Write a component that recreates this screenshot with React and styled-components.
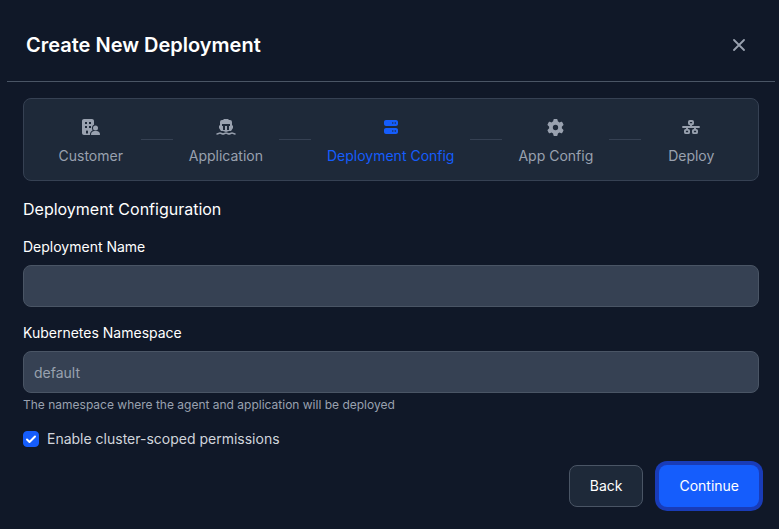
import React, { useState } from "react";
import styled, { createGlobalStyle } from "styled-components";
import { FaGear } from "react-icons/fa6";

const GlobalStyle = createGlobalStyle`
  * { box-sizing: border-box; }
  body {
    margin: 0;
    min-height: 100vh;
    background: #101828;
    color: #ffffff;
    font-family: Inter, "Liberation Sans", sans-serif;
    font-size: 14px;
    line-height: 20px;
  }
  button, input { font: inherit; }
`;

const Dialog = styled.main`
  margin: 0 4px 0 7px;
`;

const Header = styled.header`
  display: flex;
  align-items: center;
  justify-content: space-between;
  height: 82px;
  padding: 8px 20px 0 19px;
  border-bottom: 1px solid #4a5565;
`;

const Title = styled.h1`
  margin: 0;
  font-size: 20px;
  line-height: 28px;
  font-weight: 600;
`;

const CloseButton = styled.button`
  display: flex;
  align-items: center;
  justify-content: center;
  width: 32px;
  height: 32px;
  padding: 0;
  border: 0;
  border-radius: 8px;
  background: transparent;
  color: #99a1af;
  cursor: pointer;
`;

const Body = styled.form`
  padding: 16px;
`;

const Steps = styled.ol`
  display: flex;
  align-items: center;
  justify-content: center;
  gap: 16px;
  margin: 0;
  padding: 16px;
  border: 1px solid #364153;
  border-radius: 8px;
  background: #1e2939;
  list-style: none;
`;

const Step = styled.li`
  display: flex;
  flex-direction: column;
  align-items: center;
  gap: 8px;
  min-width: 68px;
  line-height: 17px;
  white-space: nowrap;
  color: ${({ $active }) => ($active ? "#155dfc" : "#99a1af")};
`;

const StepIcon = styled.span`
  display: flex;
  align-items: center;
  justify-content: center;
  height: 24px;
`;

const Connector = styled.li`
  flex: 0 1 32px;
  height: 1px;
  background: #364153;
`;

const SectionTitle = styled.h2`
  margin: 16px 0;
  font-size: 16px;
  line-height: 24px;
  font-weight: 400;
`;

const Field = styled.div`
  display: flex;
  flex-direction: column;
  margin-bottom: 16px;
`;

const Label = styled.label`
  margin-bottom: 8px;
`;

const TextInput = styled.input`
  width: 100%;
  height: 42px;
  padding: 0 10px;
  border: 1px solid #4a5565;
  border-radius: 8px;
  background: #364153;
  color: #ffffff;
  &::placeholder { color: #99a1af; opacity: 1; }
`;

const Hint = styled.small`
  margin-top: 4px;
  font-size: 12px;
  line-height: 16px;
  color: #99a1af;
`;

const CheckRow = styled.label`
  display: flex;
  align-items: center;
  gap: 8px;
  color: #d1d5dc;
`;

const Checkbox = styled.input`
  appearance: none;
  width: 16px;
  height: 16px;
  margin: 0;
  border: 1px solid #4a5565;
  border-radius: 4px;
  background: #364153;
  &:checked {
    border-color: #155dfc;
    background: #155dfc
      url("data:image/svg+xml,%3Csvg xmlns='http://www.w3.org/2000/svg' viewBox='0 0 14 14' fill='none' stroke='white' stroke-width='2' stroke-linecap='round' stroke-linejoin='round'%3E%3Cpath d='M3 7.5l2.5 2.5L11 4.5'/%3E%3C/svg%3E")
      center / 14px no-repeat;
  }
`;

const Actions = styled.footer`
  display: flex;
  justify-content: flex-end;
  gap: 16px;
  margin-top: 16px;
`;

const Button = styled.button`
  height: 42px;
  padding: 0 20px;
  border: 1px solid #4a5565;
  border-radius: 8px;
  background: #1e2939;
  color: #ffffff;
  cursor: pointer;
`;

const PrimaryButton = styled(Button)`
  border: 0;
  background: #155dfc;
  box-shadow: 0 0 0 4px #193cb8;
`;

const BuildingUserIcon = () => (
  <svg width="18" height="16" viewBox="0 0 576 512" fill="currentColor" aria-hidden="true">
    <path
      fillRule="evenodd"
      d="M64 0h256c35 0 64 29 64 64v122c-39 19-65 56-65 102 0 25 8 49 22 68-44 26-77 69-85 120-1 13 1 25 7 36H64c-35 0-64-29-64-64V64C0 29 29 0 64 0zM96 96v64h64V96H96zm128 0v64h64V96h-64zM96 224v64h64v-64H96zm128 0v64h64v-64h-64zM160 368c-18 0-32 14-32 32v64h64v-64c0-18-14-32-32-32z"
    />
    <circle cx="432" cy="288" r="80" />
    <path d="M288 492c0-61 47-108 108-108h72c61 0 108 47 108 108 0 11-9 20-20 20H308c-11 0-20-9-20-20z" />
  </svg>
);

const ShipIcon = () => (
  <svg width="20" height="18" viewBox="0 0 20 18" fill="currentColor" aria-hidden="true">
    <path
      fillRule="evenodd"
      d="M8 1h4l1 1h1a2 2 0 0 1 2 2v3l1 1v2l-2 3h-2l-3 1-3-1H5l-2-3V8l1-1V4a2 2 0 0 1 2-2h1zM6 6v2h1v4h2V8h2v4h2V8h1V6z"
    />
    <path
      d="M1 16c1.500 0 2-1 3-1s2 1 3 1 2-1 3-1 2 1 3 1 2-1 3-1 1.500 1 3 1"
      fill="none"
      stroke="currentColor"
      strokeWidth="1.500"
      strokeLinecap="round"
    />
  </svg>
);

const ServerIcon = () => (
  <svg width="14" height="16" viewBox="0 0 448 512" fill="currentColor" aria-hidden="true">
    <path
      fillRule="evenodd"
      d="M64 32C29 32 0 61 0 96v64c0 35 29 64 64 64h320c35 0 64-29 64-64V96c0-35-29-64-64-64H64zm216 72a24 24 0 1 1 0 48 24 24 0 1 1 0-48zm56 24a24 24 0 1 1 48 0 24 24 0 1 1-48 0zM64 288c-35 0-64 29-64 64v64c0 35 29 64 64 64h320c35 0 64-29 64-64v-64c0-35-29-64-64-64H64zm216 72a24 24 0 1 1 0 48 24 24 0 1 1 0-48zm56 24a24 24 0 1 1 48 0 24 24 0 1 1-48 0z"
    />
  </svg>
);

const NetworkIcon = () => (
  <svg width="18" height="16" viewBox="0 0 576 512" fill="none" stroke="currentColor" strokeWidth="60" aria-hidden="true">
    <rect x="222" y="62" width="132" height="104" rx="30" />
    <rect x="94" y="346" width="132" height="104" rx="30" />
    <rect x="350" y="346" width="132" height="104" rx="30" />
    <path d="M32 256h512" strokeLinecap="round" />
    <path d="M288 190v66M160 256v66M416 256v66" />
  </svg>
);

const CloseIcon = () => (
  <svg width="12" height="12" viewBox="0 0 12 12" fill="none" stroke="currentColor" strokeWidth="1.800" strokeLinecap="round" aria-hidden="true">
    <path d="M1 1l10 10M11 1L1 11" />
  </svg>
);

const STEPS = [
  { label: "Customer", icon: <BuildingUserIcon /> },
  { label: "Application", icon: <ShipIcon /> },
  { label: "Deployment Config", icon: <ServerIcon /> },
  { label: "App Config", icon: <FaGear size={17} /> },
  { label: "Deploy", icon: <NetworkIcon /> },
];

export default function App() {
  const [scoped, setScoped] = useState(true);
  return (
    <>
      <GlobalStyle />
      <Dialog>
        <Header>
          <Title>Create New Deployment</Title>
          <CloseButton type="button" aria-label="Close">
            <CloseIcon />
          </CloseButton>
        </Header>
        <Body onSubmit={(e) => e.preventDefault()}>
          <Steps>
            {STEPS.map((step, i) => (
              <React.Fragment key={step.label}>
                {i > 0 && <Connector aria-hidden="true" />}
                <Step $active={i === 2} aria-current={i === 2 ? "step" : undefined}>
                  <StepIcon>{step.icon}</StepIcon>
                  {step.label}
                </Step>
              </React.Fragment>
            ))}
          </Steps>
          <SectionTitle>Deployment Configuration</SectionTitle>
          <Field>
            <Label htmlFor="name">Deployment Name</Label>
            <TextInput id="name" type="text" />
          </Field>
          <Field>
            <Label htmlFor="namespace">Kubernetes Namespace</Label>
            <TextInput id="namespace" type="text" placeholder="default" aria-describedby="namespace-hint" />
            <Hint id="namespace-hint">The namespace where the agent and application will be deployed</Hint>
          </Field>
          <CheckRow>
            <Checkbox type="checkbox" checked={scoped} onChange={(e) => setScoped(e.target.checked)} />
            Enable cluster-scoped permissions
          </CheckRow>
          <Actions>
            <Button type="button">Back</Button>
            <PrimaryButton type="submit">Continue</PrimaryButton>
          </Actions>
        </Body>
      </Dialog>
    </>
  );
}
